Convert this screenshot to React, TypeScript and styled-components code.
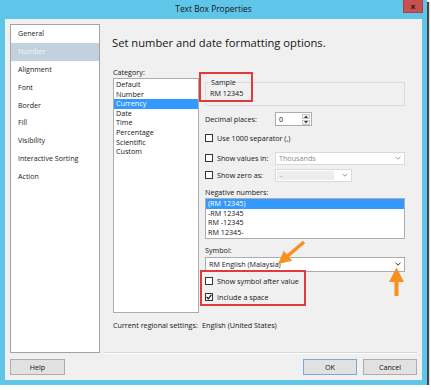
import React from "react";
import styled, { createGlobalStyle } from "styled-components";

const GlobalStyle = createGlobalStyle`
  body {
    margin: 0;
    background: #ffffff;
    font-family: "Open Sans", "Noto Sans", sans-serif;
    color: #151515;
  }
`;

const Window = styled.div`
  position: relative;
  width: 427px;
  height: 385px;
  box-sizing: border-box;
  padding: 0 5px 5px 5px;
  background: #5fc6ea;
  box-shadow: 2px 2px 1px rgba(40, 40, 40, 0.85);
  display: flex;
  flex-direction: column;
`;

const TitleBar = styled.div`
  height: 19px;
  display: grid;
  grid-template-columns: 1fr auto 1fr;
  align-items: start;
`;

const Title = styled.div`
  grid-column: 2;
  line-height: 18px;
  font-size: 8.4px;
  color: #161616;
`;

const CloseButton = styled.div`
  grid-column: 3;
  justify-self: end;
  margin-right: -1px;
  width: 20px;
  height: 13px;
  box-sizing: border-box;
  background: #c75050;
  border: 1px solid #ad4141;
  border-top: none;
  display: flex;
  align-items: center;
  justify-content: center;
  font: bold 8px "Liberation Sans", sans-serif;
  color: #111;
`;

const Client = styled.div`
  flex: 1;
  background: #f0f0f0;
  display: grid;
  grid-template-columns: 90px 1fr;
  grid-template-rows: 329px 16px;
  column-gap: 5px;
  row-gap: 6px;
  padding: 5px;
`;

const NavList = styled.div`
  border: 1px solid #a2a2a2;
  background: #fff;
`;

const NavItem = styled.div<{ $active?: boolean }>`
  height: 17.9px;
  line-height: 17.9px;
  padding-left: 7px;
  font-size: 7.1px;
  color: ${(p) => (p.$active ? "#f3f6f9" : "#1a1a1a")};
  background: ${(p) => (p.$active ? "#c3d1de" : "transparent")};
`;

const MainPanel = styled.div`
  border-bottom: 1px solid #d6d6d6;
  box-shadow: 0 1px 0 #fff;
  box-sizing: border-box;
  display: flex;
  flex-direction: column;
`;

const Heading = styled.h1`
  margin: 11px 0 0 7px;
  font-size: 11.2px;
  font-weight: 400;
  line-height: 16px;
  color: #161616;
`;

const Body = styled.div`
  margin-top: 16px;
  padding-left: 8px;
  display: grid;
  grid-template-columns: 86px 200px;
  column-gap: 6px;
  align-items: start;
`;

const Column = styled.div`
  display: flex;
  flex-direction: column;
`;

const Label = styled.div<{ $mt?: number }>`
  margin-top: ${(p) => p.$mt ?? 0}px;
  font-size: 7.2px;
  line-height: 11px;
`;

const ListBox = styled.div<{ $h: number; $pt: number }>`
  height: ${(p) => p.$h}px;
  box-sizing: border-box;
  border: 1px solid #abadb3;
  background: #fff;
  padding-top: ${(p) => p.$pt}px;
`;

const ListItem = styled.div<{ $selected?: boolean }>`
  height: 9.6px;
  line-height: 9.6px;
  padding-left: 2px;
  font-size: 7.2px;
  white-space: nowrap;
  color: ${(p) => (p.$selected ? "#fff" : "#151515")};
  background: ${(p) => (p.$selected ? "#3399ff" : "transparent")};
`;

const Annotated = styled.div<{ $mt?: number }>`
  position: relative;
  margin-top: ${(p) => p.$mt ?? 0}px;
`;

const Highlight = styled.div<{ $top: number; $left: number; $w: number; $h: number }>`
  position: absolute;
  top: ${(p) => p.$top}px;
  left: ${(p) => p.$left}px;
  width: ${(p) => p.$w}px;
  height: ${(p) => p.$h}px;
  box-sizing: border-box;
  border: 2px solid #e03a3a;
  pointer-events: none;
`;

const SampleBox = styled.fieldset`
  margin: 0;
  padding: 2px 4px 6px 4px;
  border: 1px solid #dcdcdc;
  font-size: 7.2px;
  line-height: 9.6px;
  legend {
    padding: 0;
    margin-left: 1px;
    line-height: 10px;
  }
`;

const FieldRow = styled.div<{ $mt: number; $h: number }>`
  display: flex;
  align-items: center;
  margin-top: ${(p) => p.$mt}px;
  height: ${(p) => p.$h}px;
  font-size: 7.2px;
  white-space: nowrap;
`;

const FieldLabel = styled.span<{ $w?: number }>`
  width: ${(p) => p.$w ?? 70}px;
  flex: none;
`;

const Spinner = styled.div`
  width: 37px;
  height: 14px;
  box-sizing: border-box;
  border: 1px solid #abadb3;
  background: #fff;
  display: flex;
`;

const SpinValue = styled.span`
  flex: 1;
  padding-left: 3px;
  line-height: 12px;
`;

const SpinButtons = styled.div`
  width: 8px;
  display: flex;
  flex-direction: column;
  gap: 1px;
  padding: 1px 1px 1px 0;
`;

const SpinButton = styled.div`
  flex: 1;
  border: 1px solid #c8c8c8;
  background: #f4f4f4;
  display: flex;
  align-items: center;
  justify-content: center;
`;

const CheckBox = styled.span`
  width: 8px;
  height: 8px;
  box-sizing: border-box;
  border: 1px solid #333;
  background: #fff;
  margin-right: 4px;
  flex: none;
  display: flex;
  align-items: center;
  justify-content: center;
`;

const Dropdown = styled.div<{ $w: number; $h: number; $mt?: number; $disabled?: boolean }>`
  width: ${(p) => p.$w}px;
  height: ${(p) => p.$h}px;
  margin-top: ${(p) => p.$mt ?? 0}px;
  box-sizing: border-box;
  border: 1px solid ${(p) => (p.$disabled ? "#d9d9d9" : "#acacac")};
  background: #fff;
  display: flex;
  align-items: center;
  padding: 0 3px 0 0;
  color: ${(p) => (p.$disabled ? "#8c8c8c" : "#151515")};
  font-size: 7.2px;
`;

const DropText = styled.span<{ $shade?: boolean }>`
  flex: 1;
  align-self: stretch;
  display: flex;
  align-items: center;
  padding-left: 3px;
  margin: ${(p) => (p.$shade ? "1px 8px 1px 1px" : "0")};
  background: ${(p) => (p.$shade ? "#ededed" : "transparent")};
`;

const Regional = styled.div`
  margin-top: 6.5px;
  padding-left: 8px;
  display: grid;
  grid-template-columns: 89px auto;
  font-size: 7.2px;
  line-height: 11px;
`;

const Button = styled.div<{ $w: number; $default?: boolean }>`
  width: ${(p) => p.$w}px;
  height: 16px;
  box-sizing: border-box;
  border: 1px solid ${(p) => (p.$default ? "#7aa7d6" : "#adadad")};
  background: #e1e1e1;
  display: flex;
  align-items: center;
  justify-content: center;
  font-size: 7.2px;
  color: #151515;
`;

const ButtonRow = styled.div`
  display: flex;
  justify-content: flex-end;
  gap: 6px;
`;

const Arrows = styled.svg`
  position: absolute;
  top: 0;
  left: 0;
  pointer-events: none;
`;

const Chevron = ({ color }: { color: string }) => (
  <svg width="6" height="4" viewBox="0 0 6 4">
    <path d="M0.5 0.8 L3 3.2 L5.5 0.8" fill="none" stroke={color} strokeWidth="1" />
  </svg>
);

const Check = () => (
  <svg width="6" height="6" viewBox="0 0 6 6">
    <path d="M0.6 3 L2.3 4.8 L5.4 0.9" fill="none" stroke="#1a1a1a" strokeWidth="1.3" />
  </svg>
);

const navItems = [
  "General",
  "Number",
  "Alignment",
  "Font",
  "Border",
  "Fill",
  "Visibility",
  "Interactive Sorting",
  "Action",
];

const categories = [
  "Default",
  "Number",
  "Currency",
  "Date",
  "Time",
  "Percentage",
  "Scientific",
  "Custom",
];

const negatives = ["(RM 12345)", "-RM 12345", "RM -12345", "RM 12345-"];

export default function App() {
  return (
    <>
      <GlobalStyle />
      <Window>
        <TitleBar>
          <Title>Text Box Properties</Title>
          <CloseButton>x</CloseButton>
        </TitleBar>
        <Client>
          <NavList>
            {navItems.map((n) => (
              <NavItem key={n} $active={n === "Number"}>
                {n}
              </NavItem>
            ))}
          </NavList>

          <MainPanel>
            <Heading>Set number and date formatting options.</Heading>
            <Body>
              <Column>
                <Label>Category:</Label>
                <ListBox $h={235} $pt={1}>
                  {categories.map((c) => (
                    <ListItem key={c} $selected={c === "Currency"}>
                      {c}
                    </ListItem>
                  ))}
                </ListBox>
              </Column>

              <Column>
                <Annotated $mt={10}>
                  <SampleBox>
                    <legend>Sample</legend>
                    RM 12345
                  </SampleBox>
                  <Highlight $top={-5} $left={-6} $w={54} $h={30} />
                </Annotated>

                <FieldRow $mt={6} $h={14}>
                  <FieldLabel>Decimal places:</FieldLabel>
                  <Spinner>
                    <SpinValue>0</SpinValue>
                    <SpinButtons>
                      <SpinButton>
                        <svg width="4" height="3" viewBox="0 0 4 3">
                          <path d="M0 3 L2 0.5 L4 3 Z" fill="#333" />
                        </svg>
                      </SpinButton>
                      <SpinButton>
                        <svg width="4" height="3" viewBox="0 0 4 3">
                          <path d="M0 0 L2 2.5 L4 0 Z" fill="#333" />
                        </svg>
                      </SpinButton>
                    </SpinButtons>
                  </Spinner>
                </FieldRow>

                <FieldRow $mt={6} $h={13}>
                  <CheckBox />
                  Use 1000 separator (,)
                </FieldRow>

                <FieldRow $mt={7} $h={13}>
                  <CheckBox />
                  <FieldLabel $w={58}>Show values in:</FieldLabel>
                  <Dropdown $w={130} $h={13} $disabled>
                    <DropText>Thousands</DropText>
                    <Chevron color="#9a9a9a" />
                  </Dropdown>
                </FieldRow>

                <FieldRow $mt={4} $h={13}>
                  <CheckBox />
                  <FieldLabel $w={58}>Show zero as:</FieldLabel>
                  <Dropdown $w={77} $h={13} $disabled>
                    <DropText $shade>-</DropText>
                    <Chevron color="#9a9a9a" />
                  </Dropdown>
                </FieldRow>

                <Label $mt={5}>Negative numbers:</Label>
                <ListBox $h={41} $pt={0.5}>
                  {negatives.map((n, i) => (
                    <ListItem key={n} $selected={i === 0}>
                      {n}
                    </ListItem>
                  ))}
                </ListBox>

                <Label $mt={6}>Symbol:</Label>
                <Dropdown $w={200} $h={15} $mt={1}>
                  <DropText>RM English (Malaysia)</DropText>
                  <Chevron color="#333" />
                </Dropdown>

                <Annotated $mt={3}>
                  <FieldRow $mt={0} $h={12}>
                    <CheckBox />
                    Show symbol after value
                  </FieldRow>
                  <FieldRow $mt={4} $h={12}>
                    <CheckBox>
                      <Check />
                    </CheckBox>
                    Include a space
                  </FieldRow>
                  <Highlight $top={-5} $left={-5} $w={106} $h={36} />
                </Annotated>
              </Column>
            </Body>
            <Regional>
              <span>Current regional settings:</span>
              <span>English (United States)</span>
            </Regional>
          </MainPanel>

          <Button $w={55}>Help</Button>
          <ButtonRow>
            <Button $w={54} $default>
              OK
            </Button>
            <Button $w={54}>Cancel</Button>
          </ButtonRow>
        </Client>

        <Arrows width="431" height="390" viewBox="0 0 431 390">
          <line x1="304" y1="242" x2="287" y2="256.5" stroke="#f7901e" strokeWidth="3.5" />
          <path d="M278 264 L283.8 250.7 L292.2 260.7 Z" fill="#f7901e" />
          <line x1="396.5" y1="296" x2="396.5" y2="279" stroke="#f7901e" strokeWidth="4" />
          <path d="M396.5 267.5 L389 282 L404 282 Z" fill="#f7901e" />
        </Arrows>
      </Window>
    </>
  );
}
